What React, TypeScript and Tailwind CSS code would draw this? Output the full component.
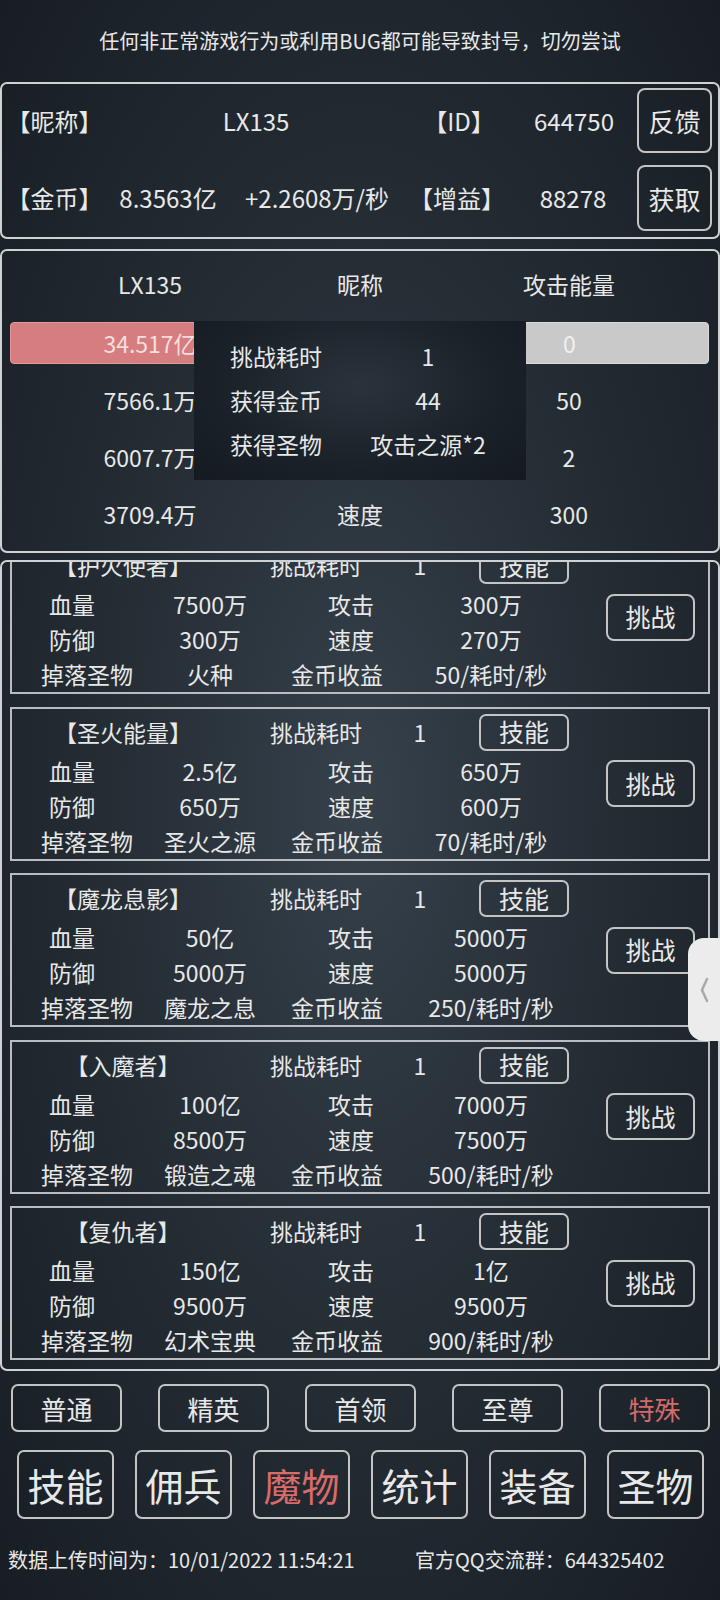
const font = "font-['Noto_Sans_CJK_SC','Noto_Sans',sans-serif]";

type Monster = {
  name: string;
  hp: string;
  atk: string;
  def: string;
  spd: string;
  drop: string;
  gold: string;
};

const monsters: Monster[] = [
  { name: "【护火使者】", hp: "7500万", atk: "300万", def: "300万", spd: "270万", drop: "火种", gold: "50/耗时/秒" },
  { name: "【圣火能量】", hp: "2.5亿", atk: "650万", def: "650万", spd: "600万", drop: "圣火之源", gold: "70/耗时/秒" },
  { name: "【魔龙息影】", hp: "50亿", atk: "5000万", def: "5000万", spd: "5000万", drop: "魔龙之息", gold: "250/耗时/秒" },
  { name: "【入魔者】", hp: "100亿", atk: "7000万", def: "8500万", spd: "7500万", drop: "锻造之魂", gold: "500/耗时/秒" },
  { name: "【复仇者】", hp: "150亿", atk: "1亿", def: "9500万", spd: "9500万", drop: "幻术宝典", gold: "900/耗时/秒" },
];

function MonsterCard({ m }: { m: Monster }) {
  return (
    <div className="h-[154px] shrink-0 border-2 border-[#b9bdc1] flex">
      <div className="flex flex-col w-[584px]">
        <div className="h-[45px] pt-[2px] flex items-center">
          <span className="w-[222px] text-center">{m.name}</span>
          <span className="w-[164px] text-center">挑战耗时</span>
          <span className="w-[44px] text-center">1</span>
          <span className="ml-[37px] w-[90px] h-[37px] rounded-[7px] border-2 border-[#c4c4c4] flex items-center justify-center text-[25px]">
            技能
          </span>
        </div>
        <div className="h-[35px] flex items-center">
          <span className="w-[120px] text-center">血量</span>
          <span className="w-[156px] text-center">{m.hp}</span>
          <span className="w-[126px] text-center">攻击</span>
          <span className="w-[154px] text-center">{m.atk}</span>
        </div>
        <div className="h-[35px] flex items-center">
          <span className="w-[120px] text-center">防御</span>
          <span className="w-[156px] text-center">{m.def}</span>
          <span className="w-[126px] text-center">速度</span>
          <span className="w-[154px] text-center">{m.spd}</span>
        </div>
        <div className="h-[35px] flex items-center">
          <span className="w-[150px] text-center">掉落圣物</span>
          <span className="w-[96px] text-center whitespace-nowrap">{m.drop}</span>
          <span className="w-[158px] text-center">金币收益</span>
          <span className="w-[150px] text-center whitespace-nowrap">{m.gold}</span>
        </div>
      </div>
      <div className="flex items-center">
        <span className="ml-[10px] w-[89px] h-[47px] rounded-[8px] border-2 border-[#c4c4c4] flex items-center justify-center text-[25px]">
          挑战
        </span>
      </div>
    </div>
  );
}

export default function App() {
  const tabs = ["普通", "精英", "首领", "至尊", "特殊"];
  const menus = ["技能", "佣兵", "魔物", "统计", "装备", "圣物"];

  return (
    <div
      className={`relative w-[720px] h-[1600px] overflow-hidden text-[#e8e8e8] ${font} bg-[radial-gradient(ellipse_at_50%_50%,#36414b_0%,#262e36_45%,#171d23_100%)]`}
    >
      <div className="h-[82px] flex items-center justify-center text-[20px]">
        任何非正常游戏行为或利用BUG都可能导致封号，切勿尝试
      </div>

      {/* player info */}
      <div className="h-[157px] border-2 border-[#cfd1d3] rounded-[7px] pt-[4px] flex flex-col gap-[12px] text-[24px]">
        <div className="h-[65px] flex items-center">
          <span className="w-[105px] text-center">【昵称】</span>
          <span className="w-[298px] text-center">LX135</span>
          <span className="w-[108px] text-center">【ID】</span>
          <span className="w-[122px] text-center">644750</span>
          <span className="ml-[2px] w-[75px] h-[65px] rounded-[8px] border-2 border-[#c4c4c4] flex items-center justify-center text-[26px]">
            反馈
          </span>
        </div>
        <div className="h-[66px] flex items-center">
          <span className="w-[105px] text-center">【金币】</span>
          <span className="w-[122px] text-center">8.3563亿</span>
          <span className="w-[176px] text-center">+2.2608万/秒</span>
          <span className="w-[104px] text-center">【增益】</span>
          <span className="w-[128px] text-center">88278</span>
          <span className="w-[75px] h-[66px] rounded-[8px] border-2 border-[#c4c4c4] flex items-center justify-center text-[26px]">
            获取
          </span>
        </div>
      </div>

      {/* battle panel */}
      <div className="relative mt-[10px] h-[304px] border-2 border-[#cfd1d3] rounded-[7px] pt-[5px] text-[23px]">
        <div className="h-[56px] flex items-center">
          <span className="w-[296px] text-center">LX135</span>
          <span className="w-[124px] text-center">昵称</span>
          <span className="w-[294px] text-center">攻击能量</span>
        </div>
        <div className="mt-[10px] h-[42px] flex items-center pl-[8px]">
          <div className="w-[280px] h-[42px] rounded-[4px] bg-[#d67d7f] border border-[#e09a9b] flex items-center justify-center text-[#f6dede]">
            34.517亿
          </div>
          <div className="ml-[140px] w-[279px] h-[42px] rounded-[4px] bg-[#c9c9c9] border border-[#dadada] flex items-center justify-center text-[#f1f1f1]">
            0
          </div>
        </div>
        <div className="pt-[8px]">
          {[
            ["7566.1万", "", "50"],
            ["6007.7万", "", "2"],
            ["3709.4万", "速度", "300"],
          ].map((r) => (
            <div key={r[0]} className="h-[57px] flex items-center">
              <span className="w-[296px] text-center">{r[0]}</span>
              <span className="w-[124px] text-center">{r[1]}</span>
              <span className="w-[294px] text-center">{r[2]}</span>
            </div>
          ))}
        </div>

        {/* result popup */}
        <div className="absolute left-[192px] top-[70px] w-[332px] h-[159px] pt-[13px] bg-[radial-gradient(ellipse_at_50%_40%,#2a333c_0%,#1a2128_60%,#141a20_100%)]">
          {[
            ["挑战耗时", "1"],
            ["获得金币", "44"],
            ["获得圣物", "攻击之源*2"],
          ].map((r) => (
            <div key={r[0]} className="h-[44px] flex items-center">
              <span className="pl-[36px] w-[160px]">{r[0]}</span>
              <span className="w-[148px] text-center">{r[1]}</span>
            </div>
          ))}
        </div>
      </div>

      {/* monster list */}
      <div className="mt-[7px] h-[811px] border-2 border-[#cfd1d3] rounded-[7px] overflow-hidden text-[23px]">
        <div className="mt-[-22px] px-[8px] flex flex-col gap-[12.5px]">
          {monsters.map((m) => (
            <MonsterCard key={m.name} m={m} />
          ))}
        </div>
      </div>

      {/* difficulty tabs */}
      <div className="mt-[13px] pl-[11px] flex gap-[36px]">
        {tabs.map((t) => (
          <span
            key={t}
            className={`w-[111px] h-[48px] rounded-[7px] border-2 border-[#c4c4c4] flex items-center justify-center text-[26px] ${
              t === "特殊" ? "text-[#d46a6a]" : ""
            }`}
          >
            {t}
          </span>
        ))}
      </div>

      {/* main menu */}
      <div className="mt-[18px] pl-[17px] flex gap-[21px]">
        {menus.map((t) => (
          <span
            key={t}
            className={`w-[97px] h-[69px] rounded-[7px] border-2 border-[#c4c4c4] flex items-center justify-center text-[38px] ${
              t === "魔物" ? "text-[#d96b6b]" : ""
            }`}
          >
            {t}
          </span>
        ))}
      </div>

      <div className="mt-[26px] pl-[8px] flex text-[20px]">
        <span className="w-[407px]">数据上传时间为：10/01/2022 11:54:21</span>
        <span>官方QQ交流群：644325402</span>
      </div>

      {/* side handle */}
      <div className="absolute right-0 top-[938px] w-[32px] h-[103px] rounded-l-[16px] bg-[#ececec] flex items-center justify-center">
        <svg width="10" height="26" viewBox="0 0 10 26">
          <polyline points="8,2 3,13 8,24" fill="none" stroke="#a9a9a9" strokeWidth="2.5" strokeLinecap="round" />
        </svg>
      </div>
    </div>
  );
}
